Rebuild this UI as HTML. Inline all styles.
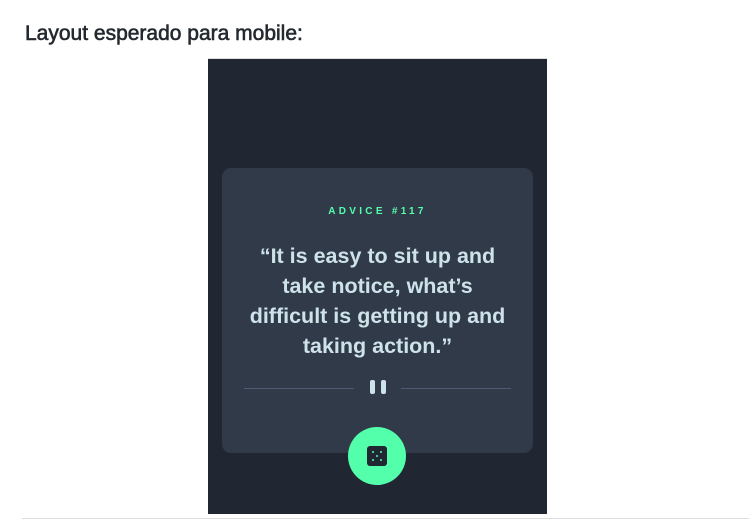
<!DOCTYPE html>
<html><head><style>
body{margin:0;width:749px;height:530px;background:#fff;position:relative;overflow:hidden;font-family:"Liberation Sans",sans-serif}
h3{position:absolute;left:25px;top:22px;margin:0;font-size:21px;font-weight:normal;color:#24292f;-webkit-text-stroke:0.6px #24292f}
.phone{position:absolute;left:208px;top:58px;width:339px;height:455px;background:#202632;border-top:1px solid #ddd}
.card{position:absolute;left:14px;top:109px;width:311px;height:285px;background:#313a49;border-radius:9px}
.lbl{position:absolute;left:0;width:100%;top:147px;text-align:center;color:#53ffaa;font-size:10px;font-weight:bold;letter-spacing:3.3px}
.q{position:absolute;left:0;width:100%;top:182px;text-align:center;color:#cee3e9;font-size:21.5px;font-weight:bold;line-height:30px;letter-spacing:0}
.ln{position:absolute;top:329px;height:1px;background:#4f5d74}
.bar{position:absolute;top:321px;width:5px;height:14px;background:#cee3e9;border-radius:2px}
.btn{position:absolute;left:140px;top:368px;width:58px;height:58px;border-radius:50%;background:#53ffaa}
.die{position:absolute;left:19px;top:19px;width:20px;height:20px;background:#202632;border-radius:3px}
.d{position:absolute;width:2px;height:2px;background:#53ffaa;border-radius:1px}
hr{position:absolute;left:22px;right:0;top:518px;margin:0;border:0;border-top:1px solid #ddd}
</style></head><body>
<h3>Layout esperado para mobile:</h3>
<div class="phone">
<div class="card"></div>
<div class="lbl">ADVICE #117</div>
<div class="q">“It is easy to sit up and<br>take notice, what’s<br>difficult is getting up and<br>taking action.”</div>
<div class="ln" style="left:36px;width:110px"></div>
<div class="ln" style="left:193px;width:110px"></div>
<div class="bar" style="left:162px"></div>
<div class="bar" style="left:173px"></div>
<div class="btn"><div class="die">
<div class="d" style="left:5px;top:5px"></div><div class="d" style="left:13px;top:5px"></div>
<div class="d" style="left:9px;top:9px"></div>
<div class="d" style="left:5px;top:13px"></div><div class="d" style="left:13px;top:13px"></div>
</div></div>
</div>
<hr>
</body></html>
